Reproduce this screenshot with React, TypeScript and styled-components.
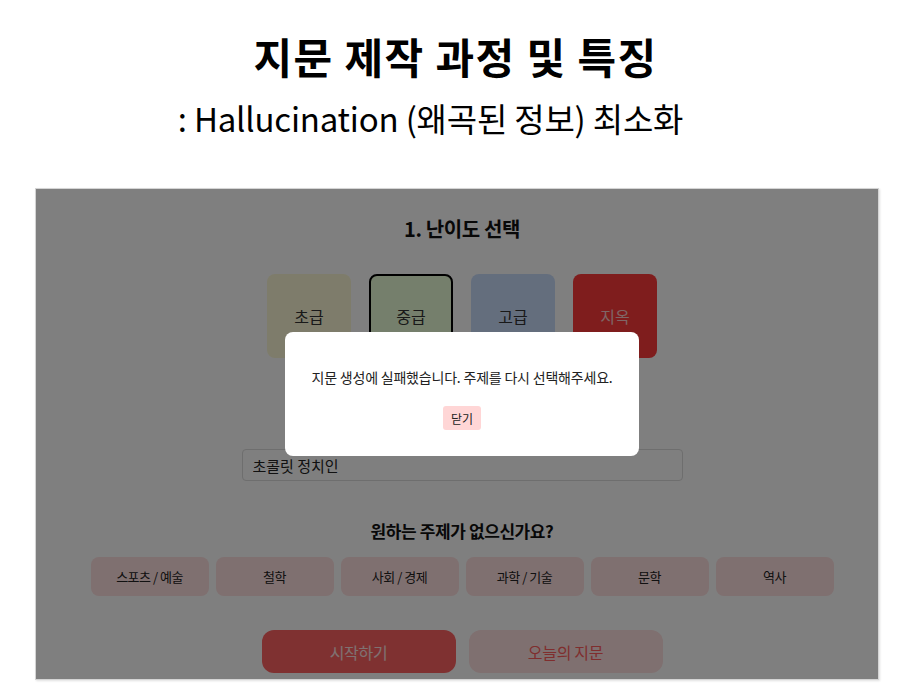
import React from "react";
import styled, { createGlobalStyle } from "styled-components";

const GlobalStyle = createGlobalStyle`
  html, body { margin: 0; padding: 0; background: #ffffff; }
  body { font-family: "Noto Sans CJK KR", "Noto Sans", sans-serif; color: #111; }
  * { box-sizing: border-box; }
`;

const Page = styled.div`
  width: 905px;
  height: 698px;
  overflow: hidden;
`;

const Header = styled.header`
  display: flex;
  flex-direction: column;
  align-items: center;
  padding-top: 32px;
`;

const Title = styled.h1`
  margin: 0;
  padding-left: 6px;
  font-size: 42px;
  line-height: 48px;
  font-weight: 700;
  letter-spacing: 1.4px;
  color: #000;
`;

const Subtitle = styled.p`
  margin: 18px 0 0;
  padding-right: 44px;
  font-size: 33px;
  line-height: 40px;
  font-weight: 400;
  letter-spacing: -0.2px;
  color: #000;
`;

const Frame = styled.section`
  position: relative;
  margin: 50px 0 0 35px;
  width: 844px;
  height: 492px;
  border: 1px solid #d4d4d4;
  box-shadow: 1px 1px 2px rgba(0, 0, 0, 0.12);
  background: #ffffff;
  overflow: hidden;
`;

const Content = styled.div`
  display: flex;
  flex-direction: column;
  align-items: center;
  padding: 26px 0 0 10px;
`;

const SectionTitle = styled.h2<{ $size?: number; $mt?: number }>`
  margin: ${(p) => p.$mt ?? 0}px 0 0;
  font-size: ${(p) => p.$size ?? 20}px;
  line-height: 28px;
  font-weight: 700;
  letter-spacing: -0.4px;
  color: #111;
`;

const LevelRow = styled.div`
  display: flex;
  gap: 18px;
  margin-top: 31px;
`;

const LevelCard = styled.button<{ $bg: string; $fg: string; $selected?: boolean }>`
  width: 84px;
  height: 84px;
  border-radius: 8px;
  border: 2px solid ${(p) => (p.$selected ? "#000" : "transparent")};
  background: ${(p) => p.$bg};
  color: ${(p) => p.$fg};
  font-family: inherit;
  font-size: 16px;
  padding: 0;
  display: flex;
  align-items: center;
  justify-content: center;
`;

const TopicInput = styled.input`
  margin-top: 91px;
  width: 441px;
  height: 32px;
  border: 1px solid #dcdcdc;
  border-radius: 4px;
  padding: 0 10px;
  font-family: inherit;
  font-size: 15px;
  color: #222;
  background: #fff;
  outline: none;
`;

const TopicRow = styled.div`
  display: flex;
  gap: 7px;
  margin-top: 12px;
`;

const TopicButton = styled.button`
  width: 118px;
  height: 39px;
  border: none;
  border-radius: 8px;
  background: #ffe0e0;
  color: #222;
  font-family: inherit;
  font-size: 13px;
  letter-spacing: -0.5px;
`;

const ActionRow = styled.div`
  display: flex;
  gap: 13px;
  margin-top: 34px;
`;

const ActionButton = styled.button<{ $primary?: boolean }>`
  width: 194px;
  height: 43px;
  border: none;
  border-radius: 12px;
  background: ${(p) => (p.$primary ? "#ff6262" : "#ffe0e0")};
  color: ${(p) => (p.$primary ? "#ffe4e4" : "#ff5c5c")};
  font-family: inherit;
  font-size: 16px;
  letter-spacing: -0.3px;
`;

const Overlay = styled.div`
  position: absolute;
  inset: 0;
  background: rgba(0, 0, 0, 0.5);
  display: flex;
  justify-content: center;
  align-items: flex-start;
  padding: 143px 0 0 10px;
`;

const Modal = styled.div`
  width: 354px;
  height: 124px;
  background: #ffffff;
  border-radius: 8px;
  display: flex;
  flex-direction: column;
  align-items: center;
  padding-top: 35px;
`;

const ModalText = styled.p`
  margin: 0;
  font-size: 14px;
  line-height: 20px;
  letter-spacing: -0.2px;
  color: #222;
`;

const CloseButton = styled.button`
  margin-top: 19px;
  height: 24px;
  padding: 0 8px;
  border: none;
  border-radius: 3px;
  background: #ffd6d6;
  color: #222;
  font-family: inherit;
  font-size: 12px;
`;

const levels = [
  { label: "초급", bg: "#fdf9d6", fg: "#333" },
  { label: "중급", bg: "#eaffd8", fg: "#333", selected: true },
  { label: "고급", bg: "#c9dcfb", fg: "#333" },
  { label: "지옥", bg: "#ff3a3a", fg: "#ffcccc" },
];

const topics = ["스포츠 / 예술", "철학", "사회 / 경제", "과학 / 기술", "문학", "역사"];

export default function App() {
  return (
    <Page>
      <GlobalStyle />
      <Header>
        <Title>지문 제작 과정 및 특징</Title>
        <Subtitle>: Hallucination (왜곡된 정보) 최소화</Subtitle>
      </Header>
      <Frame>
        <Content>
          <SectionTitle>1. 난이도 선택</SectionTitle>
          <LevelRow>
            {levels.map((l) => (
              <LevelCard key={l.label} $bg={l.bg} $fg={l.fg} $selected={l.selected}>
                {l.label}
              </LevelCard>
            ))}
          </LevelRow>
          <TopicInput defaultValue="초콜릿 정치인" />
          <SectionTitle $size={17} $mt={36}>원하는 주제가 없으신가요?</SectionTitle>
          <TopicRow>
            {topics.map((t) => (
              <TopicButton key={t}>{t}</TopicButton>
            ))}
          </TopicRow>
          <ActionRow>
            <ActionButton $primary>시작하기</ActionButton>
            <ActionButton>오늘의 지문</ActionButton>
          </ActionRow>
        </Content>
        <Overlay>
          <Modal>
            <ModalText>지문 생성에 실패했습니다. 주제를 다시 선택해주세요.</ModalText>
            <CloseButton>닫기</CloseButton>
          </Modal>
        </Overlay>
      </Frame>
    </Page>
  );
}
